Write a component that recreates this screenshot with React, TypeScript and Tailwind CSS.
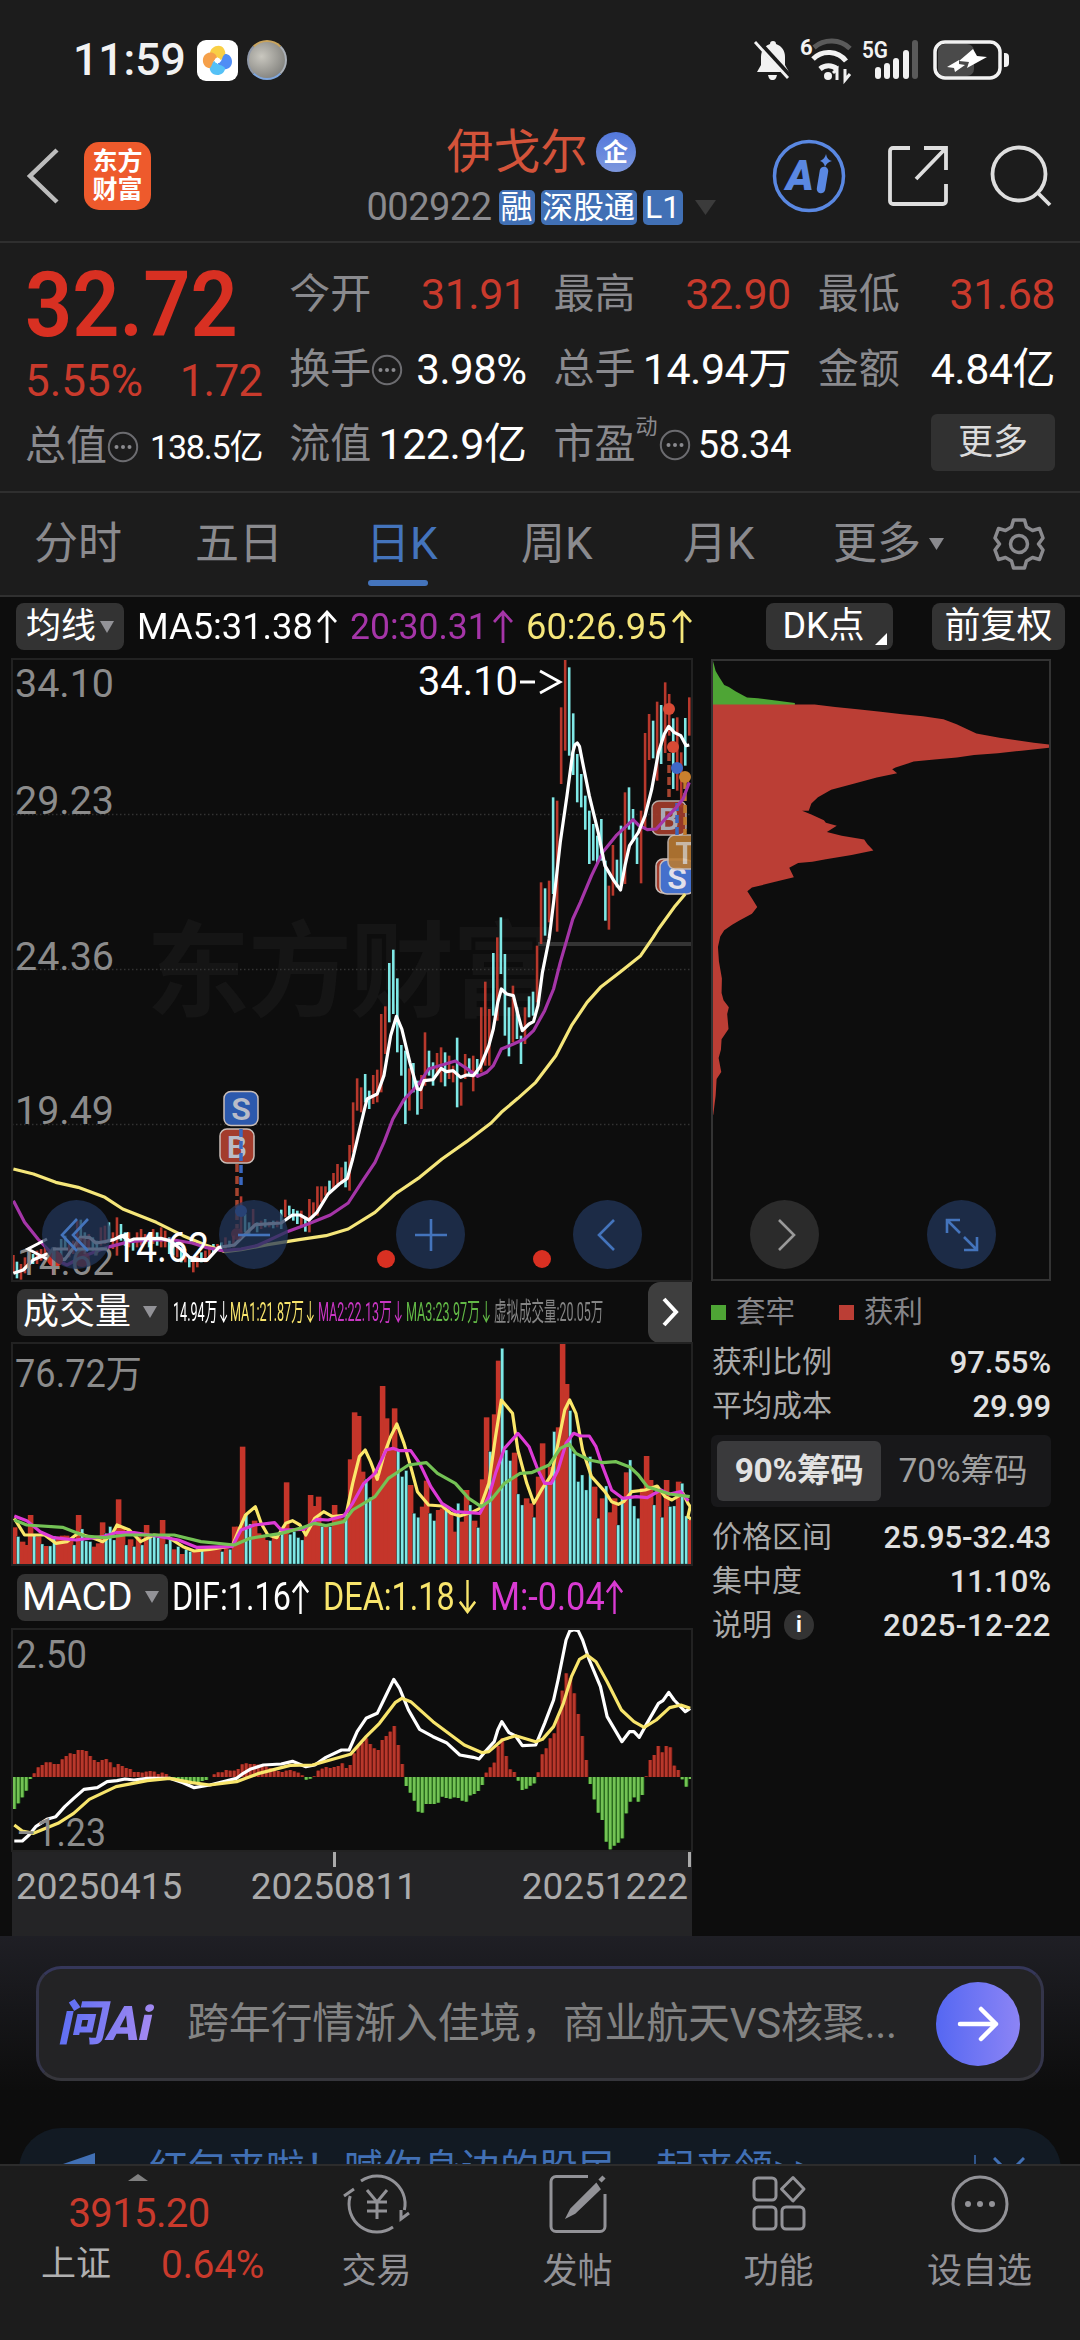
import React from 'react';
import clsx from 'clsx';

const RED = '#b8382c';
const CYAN = '#7fe8e6';

// each entry: colour, x, high, low
const CANDLES_LOW =
  'r30,948,1003 c38,968,1018 r47,975,1022 r56,955,1003 r65,950,985 c74,945,975 r83,935,975 r92,930,965 r101,925,960 r110,935,970 r119,930,1008 r128,935,985 c137,900,960 c146,890,930 r155,915,955 r164,905,945 r173,845,925 c181,842,905 c190,880,945 r199,885,930 c208,895,935 c217,905,940 r226,865,920 r235,860,915 c244,850,905 r253,880,930 r262,835,950 c271,855,905 c280,880,920 r289,880,925 c298,900,935 r307,880,925 r316,870,920 r325,885,915 c334,890,925 r343,870,915 c352,880,920 r361,865,925 r370,875,925 c379,895,945 c388,905,950 r397,920,955 c406,925,970 r415,930,970 c424,955,985 r433,960,1000 r442,950,985 c451,940,970 r460,935,970 r469,920,955 c478,915,945 r487,915,935 c496,910,935 r505,895,930 c514,905,925 r523,890,925 r540,772,880 c549,825,880 c558,850,885 r567,810,870 c576,850,880 r585,845,870 c594,840,865 r603,848,865 c612,845,868 r621,845,865 c630,812,870 r639,782,835 c648,800,830 c657,810,845 c666,815,855 r675,815,860 c684,835,878 r693,780,880 r702,790,835 r711,742,830 r720,742,790 r729,742,770 c738,725,760 r747,702,750 r756,675,735 r765,685,735 c774,668,745 r783,618,755 r791,490,640 r800,418,515 r809,445,520 c818,405,490 c827,455,510 r836,408,495 r845,392,490 r854,225,460 r863,202,345 c872,72,250 c881,32,225 c890,118,340 c899,318,410 c908,335,555 r917,388,515 c926,372,460 c935,425,527 r944,408,510 r952,280,440 c961,335,410 c970,370,440 r979,342,410 r988,325,430 c997,340,442 r1006,350,420 r1015,380,430 c1024,296,505 r1033,430,500 r1042,345,420 c1051,358,410 r1060,350,457 c1069,360,410 r1078,205,400 r1087,128,380 r1096,210,380 c1105,42,230 r1114,-5,245 c1122,-65,105 c1131,45,290 c1140,205,352 r1149,140,310 c1158,205,300 c1167,290,375 r1176,205,315 c1185,172,235 c1194,158,230 r1203,20,190';
const CANDLES_HIGH =
  'r1212,880,1065 c1221,898,1040 r1230,875,1000 c1239,625,915 r1248,635,1028 r1257,355,585 r1266,210,485 c1275,235,500 c1284,373,558 c1293,495,640 c1302,555,655 c1311,620,722 c1320,665,825 c1329,705,815 c1338,740,825 c1347,690,815 c1356,815,995 r1364,890,1022 r1373,768,920 c1382,812,895 c1391,710,890 r1400,610,885 c1409,595,722 c1418,660,755 c1427,745,825 r1436,665,883 r1445,432,715 r1454,375,513 c1463,395,508 r1472,338,575 c1481,348,525 r1490,280,492 r1499,315,440 c1508,388,600 r1517,385,605 r1526,490,655 c1535,387,530 r1544,325,440';

const VOLUMES =
  'r772 c800 r815 r825 r735 c792 r800 c822 r828 c828 c798 r800 r797 r797 r812 c825 r735 c777 c813 c815 r830 r820 r757 c790 c770 c810 r688 r775 c825 r808 c830 r800 c825 r765 c800 c800 c803 r750 c822 c808 r838 c830 r852 c838 c845 r840 r838 c842 r835 r838 r838 r838 c845 r835 c838 r770 r770 r530 c730 c762 r752 r790 r800 r810 c812 r800 r800 c778 r637 c793 c785 c803 c810 r770 r675 r708 r680 c770 r765 c770 r705 r745 r745 c740 r568 r427 r438 r605 c628 c682 r600 r620 r348 r445 r540 r415 c538 c620 c602 r645 c730 c742 r710 r632 c730 c752 r720 r715 c718 r730 r785 c700 r755 r660 c705 r752 c773 r628 r442 c545 r433 r272 c235 c540 c572 r548 c672 c705 r685 r700 c742 r620 r520 c645 r590 c485 r472 r222 r342 c422 c550 c635 c615 c660 c560 r650 c745 r685 c648 r727 r685 c765 c680 r607 c570 c708 c745 r655 r558 r630 c705 r655 c742 r630 c710 c708 r635 c640 c738 r750';

const MACD_BARS = [
  747, 730, 712, 692, 657, 640, 622, 615, 607, 607, 612, 612, 598, 588, 580, 582, 570, 570, 573, 588, 600, 606, 600, 597, 607, 622, 612, 618, 624, 627,
  636, 636, 638, 635, 633, 635, 642, 638, 642, 655, 658, 660, 664, 668, 670, 670, 668, 663, 660, 651, 643, 637, 637, 630, 632, 632, 627, 613, 610, 612,
  612, 614, 616, 620, 624, 630, 633, 636, 632, 630, 634, 638, 646, 659, 656, 649, 632, 626, 621, 624, 621, 618, 610, 624, 615, 580, 560, 548, 535, 552,
  565, 570, 540, 528, 515, 498, 555, 612, 678, 698, 722, 755, 758, 732, 732, 732, 728, 710, 714, 716, 712, 714, 722, 725, 706, 702, 693, 675, 638, 622,
  608, 558, 535, 588, 628, 636, 662, 690, 686, 677, 670, 637, 583, 565, 535, 520, 470, 392, 340, 355, 400, 462, 528, 600, 672, 718, 758, 780, 845, 868,
  857, 848, 835, 760, 725, 712, 725, 705, 649, 600, 585, 558, 577, 558, 562, 617, 630, 658, 680, 657,
];

const Candles: React.FC<{ data: string }> = ({ data }) => (
  <>
    {data.split(' ').map(item => {
      const [x, high, low] = item.slice(1).split(',').map(Number);
      return (
        <path
          key={item}
          d={`M${x} ${high}V${low}`}
          stroke={item[0] === 'r' ? RED : CYAN}
          strokeWidth={2.6}
          vectorEffect="non-scaling-stroke"
        />
      );
    })}
  </>
);

const Line: React.FC<{ points: string; color: string; width?: number }> = ({ points, color, width = 3.2 }) => (
  <polyline
    points={points}
    fill="none"
    stroke={color}
    strokeWidth={width}
    strokeLinejoin="round"
    vectorEffect="non-scaling-stroke"
  />
);

const AxisText: React.FC<{ x: number; y: number; w: number; size?: number; color?: string; children: string }> = ({
  x,
  y,
  w,
  size = 39,
  color = '#8b8b8b',
  children,
}) => (
  <text x={x} y={y} fontSize={size} fill={color} textLength={w} lengthAdjust="spacingAndGlyphs">
    {children}
  </text>
);

const Marker: React.FC<{ x: number; y: number; label?: string; color: string; textColor?: string; opacity?: number }> = ({
  x,
  y,
  label,
  color,
  textColor = '#b9bcc8',
  opacity = 1,
}) => (
  <g opacity={opacity}>
    <rect x={x} y={y} width={34} height={34} rx={7} fill={color} stroke="#c9bdb8" strokeWidth={1.5} />
    {label && (
      <text x={x + 17} y={y + 28.5} fontSize={32} fontWeight={600} fill={textColor} textAnchor="middle">
        {label}
      </text>
    )}
  </g>
);

const Triangle: React.FC<{ className?: string }> = ({ className }) => (
  <svg viewBox="0 0 14 12" preserveAspectRatio="none" className={clsx('shrink-0', className)} fill="currentColor">
    <path d="M0 0h14L7 12z" />
  </svg>
);

const Dots: React.FC = () => (
  <svg viewBox="0 0 32 32" className="h-8 w-8 shrink-0" fill="none" stroke="#6c6c70" strokeWidth={2}>
    <circle cx={16} cy={16} r={14.2} />
    <g fill="#8a8a8e" stroke="none">
      <circle cx={9.5} cy={16} r={2} />
      <circle cx={16} cy={16} r={2} />
      <circle cx={22.5} cy={16} r={2} />
    </g>
  </svg>
);

const Arrow: React.FC<{ down?: boolean; className: string }> = ({ down, className }) => (
  <svg
    viewBox="0 0 20 33"
    preserveAspectRatio="none"
    className={clsx('shrink-0', down && 'rotate-180', className)}
    fill="none"
    stroke="currentColor"
    strokeWidth={2.8}
  >
    <path d="M10 33V2M1 12l9-10 9 10" />
  </svg>
);

const StatusBar: React.FC = () => (
  <div className="flex h-[120px] items-center pl-[73px] pr-[70px] text-[#f2f2f2]">
    <span className="w-[124px] whitespace-nowrap text-[44.5px] font-medium leading-none">11:59</span>
    <svg viewBox="0 0 41 41" className="h-[41px] w-[41px]">
      <rect width={41} height={41} rx={9} fill="#fff" />
      <path d="M13 14C13 6 24 3 27 9c3 5 1 11-5 11-1-5-6-2-9-6z" fill="#f9cf45" />
      <path d="M28 14c8 0 9 11 4 14-5 3-11 1-11-5 5-1 3-6 7-9z" fill="#4f8df5" />
      <path d="M28 28c0 8-11 9-14 4-3-5-1-11 5-11 1 5 6 3 9 7z" fill="#55c1f6" />
      <path d="M13 28C5 28 4 17 9 14c5-3 11-1 11 5-5 1-4 6-7 9z" fill="#f5a04a" />
      <circle cx={20.5} cy={20.5} r={2.8} fill="#fff" />
    </svg>
    <span className="ml-[9px] h-10 w-10 rounded-full border-2 border-t-[#c9a45e] border-r-[#aab0b8] border-b-[#7fa6dc] border-l-[#8f98a8] bg-radial-[at_35%_40%] from-[#c9c7bf] to-[#6f6f6c]" />
    <div className="ml-auto flex items-center">
      <svg viewBox="0 0 38 42" className="h-[42px] w-[38px]">
        <path d="M20 2c2 0 3 1 3 3 6 2 9 7 9 13v8l4 7H4l4-7v-8C8 12 11 7 17 5c0-2 1-3 3-3z" fill="#f2f2f2" />
        <path d="M15 36h9c-1 4-2 5-4.5 5S16 40 15 36z" fill="#f2f2f2" />
        <path d="M3 1l34 37" stroke="#1c1c1c" strokeWidth={6} />
        <path d="M2 3l33 36" stroke="#f2f2f2" strokeWidth={2.8} />
      </svg>
      <svg viewBox="0 0 54 44" className="ml-[9px] h-11 w-[54px] overflow-visible" fill="none" strokeWidth={5}>
        <text x={0} y={17} fontSize={22} fontWeight={700} fill="#f2f2f2">
          6
        </text>
        <path d="M14 9.500a27 27 0 0 1 36 1" stroke="#5a5a5a" />
        <path d="M13 21a22 22 0 0 1 33 2" stroke="#f2f2f2" />
        <path d="M20 31a13 13 0 0 1 17 0" stroke="#f2f2f2" />
        <circle cx={28} cy={38} r={4} fill="#f2f2f2" />
        <path d="M37 42V31l-4 4M45 31v11l5-6" stroke="#f2f2f2" strokeWidth={3} />
      </svg>
      <svg viewBox="0 0 58 44" className="ml-2 h-11 w-[58px] overflow-visible">
        <text x={0} y={20} fontSize={24} fontWeight={600} fill="#f2f2f2" textLength={26} lengthAdjust="spacingAndGlyphs">
          5G
        </text>
        <g fill="#f2f2f2">
          <rect x={13} y={29} width={6} height={12} rx={3} />
          <rect x={22} y={25} width={6} height={16} rx={3} />
          <rect x={31} y={20} width={6} height={21} rx={3} />
          <rect x={41} y={12} width={6} height={29} rx={3} />
          <rect x={50} y={2} width={6} height={39} rx={3} fill="#5a5a5a" />
        </g>
      </svg>
      <svg viewBox="0 0 77 40" className="ml-[13px] h-10 w-[77px]">
        <rect x={5} y={4} width={36} height={32} rx={7} fill="#4a4a4a" />
        <rect x={2} y={2} width={65} height={36} rx={10} fill="none" stroke="#f2f2f2" strokeWidth={3.5} />
        <path d="M71 13h1a4 4 0 0 1 4 4v6a4 4 0 0 1-4 4h-1z" fill="#f2f2f2" />
        <path d="M40 9L26 21l10 1-2 6 20-11-10-1zM26 20l-12 7 7 1 1 4 10-7-6-1z" fill="#fff" />
      </svg>
    </div>
  </div>
);

const Header: React.FC = () => (
  <div className="grid h-[123px] grid-cols-[1fr_auto_1fr] items-center border-b-2 border-[#2f2f2f] pl-[26px] pr-[28px]">
    <div className="flex items-center pb-2.5">
      <svg viewBox="0 0 34 58" className="h-[58px] w-[34px]" fill="none" stroke="#bcbcbc" strokeWidth={4.5}>
        <path d="M31 3L4 29l27 26" />
      </svg>
      <div className="ml-6 flex h-[68px] w-[67px] flex-col items-center justify-center rounded-[15px] bg-[#ee5a2c] text-[25px] font-bold leading-[28px] text-white">
        <span>东方</span>
        <span>财富</span>
      </div>
    </div>
    <div className="flex flex-col items-center pb-[7px] pl-1">
      <div className="flex h-[60px] items-center gap-2 text-[47px] leading-[60px] text-[#d3533a]">
        伊戈尔
        <span className="flex h-10 w-10 items-center justify-center rounded-full bg-linear-to-b from-[#5378dc] to-[#7d97dd] text-[25px] font-bold leading-none text-white">
          企
        </span>
      </div>
      <div className="flex h-[50px] items-center text-[32px] leading-none text-white">
        <span className="mr-[7px] text-[38px] tracking-[-0.5px] text-[#8a8a8e]">002922</span>
        <span className="mr-1.5 flex h-[35px] items-center rounded-[5px] bg-[#4170b5] px-0.5">融</span>
        <span className="mr-1.5 flex h-[35px] w-24 items-center justify-center rounded-[5px] bg-[#4170b5] text-[31px]">深股通</span>
        <span className="mr-3 flex h-[35px] w-10 items-center justify-center rounded-[5px] bg-[#4170b5]">L1</span>
        <Triangle className="h-[15px] w-[21px] text-[#3b3b3b]" />
      </div>
    </div>
    <div className="flex items-center justify-end gap-[42px] pb-2.5">
      <svg viewBox="0 0 74 74" className="h-[74px] w-[74px]" fill="none">
        <circle cx={37} cy={37} r={34.5} stroke="#5a88e2" strokeWidth={3.5} />
        <text x={14} y={51} fontSize={42} fontWeight={900} fontStyle="italic" fill="#5a88e2">
          A
        </text>
        <path d="M52 32l-3 18" stroke="#5a88e2" strokeWidth={8.5} strokeLinecap="round" />
        <path d="M54 15q1 6 6 7-5 1-7 6-1-5-5-6 5-2 6-7z" fill="#5a88e2" />
      </svg>
      <svg viewBox="0 0 60 60" className="h-[60px] w-[60px]" fill="none" stroke="#dedede" strokeWidth={3.8}>
        <path d="M22 2H5a3 3 0 0 0-3 3v50a3 3 0 0 0 3 3h50a3 3 0 0 0 3-3V38M36 2h22v22M57 3L28 33" />
      </svg>
      <svg viewBox="0 0 62 62" className="h-[62px] w-[62px]" fill="none" stroke="#dedede" strokeWidth={3.8}>
        <circle cx={29} cy={29} r={26.5} />
        <path d="M48 48l12 12" />
      </svg>
    </div>
  </div>
);

interface StatProps {
  label: string;
  value: string;
  up?: boolean;
  dots?: boolean;
  sup?: string;
  valueClass?: string;
}

const Stat: React.FC<StatProps> = ({ label, value, up, dots, sup, valueClass }) => (
  <div className="flex h-[75px] items-center whitespace-nowrap">
    <span className="text-[41px] leading-none text-[#8a8a8e]">{label}</span>
    {sup && <span className="-mt-9 w-[23px] text-[22px] leading-none text-[#8a8a8e]">{sup}</span>}
    {dots && <Dots />}
    <span className={clsx('ml-auto leading-none tracking-[-0.5px]', valueClass ?? 'text-[43px]', up ? 'text-[#c93a2c]' : 'text-white')}>
      {value}
    </span>
  </div>
);

const QuotePanel: React.FC = () => (
  <div className="grid h-[250px] grid-cols-4 gap-x-[27px] border-b-2 border-[#2f2f2f] pl-[25px] pr-[25px] pt-3.5">
    <div>
      <div className="h-24 origin-left scale-x-[0.92] whitespace-nowrap pt-px text-[90px] font-semibold leading-[96px] text-[#d83022]">
        32.72
      </div>
      <div className="flex h-14 items-center justify-between text-[44px] leading-none text-[#c93a2c]">
        <span>5.55%</span>
        <span className="tracking-[-0.8px]">1.72</span>
      </div>
      <Stat label="总值" value="138.5亿" dots valueClass="text-[34px] tracking-[-1.2px]" />
    </div>
    <div>
      <Stat label="今开" value="31.91" up />
      <Stat label="换手" value="3.98%" dots valueClass="text-[42px]" />
      <Stat label="流值" value="122.9亿" />
    </div>
    <div>
      <Stat label="最高" value="32.90" up />
      <Stat label="总手" value="14.94万" />
      <Stat label="市盈" value="58.34" sup="动" dots valueClass="text-[38px]" />
    </div>
    <div>
      <Stat label="最低" value="31.68" up />
      <Stat label="金额" value="4.84亿" />
      <button className="ml-auto mt-[7px] block h-[57px] w-[124px] rounded-md bg-[#313131] text-[35px] leading-[53px] text-[#dcdcdc]">更多</button>
    </div>
  </div>
);

const PeriodTabs: React.FC = () => (
  <div className="flex h-[104px] items-center border-b-2 border-[#303030] pl-[34px] text-[44px] leading-none text-[#8a8a8e]">
    <span className="w-[161px]">分时</span>
    <span className="w-[171px]">五日</span>
    <span className="relative w-[155px] text-[#4474bc]">
      日K
      <i className="absolute -bottom-[20px] left-0.5 h-1.5 w-[60px] rounded-full bg-[#4474bc]" />
    </span>
    <span className="w-[162px]">周K</span>
    <span className="w-[150px]">月K</span>
    <span className="flex w-[160px] items-center gap-2">
      更多
      <Triangle className="h-3 w-[15px]" />
    </span>
    <svg viewBox="0 0 52 52" className="h-[52px] w-[52px]" fill="none" stroke="#8a8a8e" strokeWidth={3.5} strokeLinejoin="round">
      <path d="M20.5 2h11l2 7 6 3.500 7-2 3.500 9.500-4.500 6 4.500 6-3.500 9.500-7-2-6 3.500-2 7h-11l-2-7-6-3.500-7 2L2 32l4.500-6L2 20l3.500-9.500 7 2 6-3.500z" />
      <circle cx={26} cy={26} r={8.5} />
    </svg>
  </div>
);

const PriceChart: React.FC = () => (
  <svg viewBox="0 0 680 621" className="block h-[621px] w-[680px]">
    <text x={134} y={350} fontSize={104} fontWeight={700} fill="#151515" textLength={410}>
      东方财富
    </text>
    <g stroke="#333" strokeWidth={1.5} strokeDasharray="1.5 2.5">
      <path d="M0 155.500h680M0 310.500h680M0 465.500h680" />
    </g>
    <path d="M526 285h154" stroke="#343434" strokeWidth={4} />
    <g transform="translate(-12 280) scale(.446429 .333333)">
      <Candles data={CANDLES_LOW} />
    </g>
    <g transform="translate(-12 -70) scale(.446429 .333333)">
      <Candles data={CANDLES_HIGH} />
    </g>
    <g fill="#d84a35">
      <circle cx={657} cy={50} r={6} />
      <circle cx={661} cy={88} r={6} />
    </g>
    <Marker x={212} y={432.5} label="S" color="#2c59ad" />
    <Marker x={208} y={470} label="B" color="#a33c2c" />
    <Marker x={644} y={200} color="#a33c2c" />
    <Marker x={648} y={201} label="S" color="#4470cc" textColor="#e3e0ea" />
    <Marker x={656} y={176} label="T" color="#b97a33" textColor="#dccbb8" opacity={0.9} />
    <Marker x={640} y={142} label="B" color="#a33c2c" opacity={0.9} />
    <g strokeWidth={3.5} strokeDasharray="8 4" fill="none">
      <path d="M225 505v64M657 94v46" stroke="#a5442f" />
      <path d="M229 470v58M665 144v34" stroke="#3a68c0" />
      <path d="M673 122v54" stroke="#c07a2c" />
    </g>
    <circle cx={665} cy={109} r={6} fill="#3f68c8" />
    <circle cx={673} cy={118} r={6} fill="#c9802e" />
    <g transform="translate(-12 280) scale(.446429 .333333)">
      <Line
        color="#f5e67a"
        points="30,690 75,705 125,730 175,745 235,775 275,810 350,850 410,890 460,918 505,938 540,932 600,917 670,902 730,890 780,870 840,820 885,765 940,715 990,660 1045,608 1100,552 1123,520 1160,478 1200,430 1245,350 1280,260 1315,190 1345,145 1390,98 1435,50 1463,-5 1475,-30 1510,-95 1535,-135"
      />
      <Line
        color="#a535a8"
        points="30,785 55,850 85,900 110,935 130,965 150,978 175,960 200,945 240,925 290,908 340,903 390,903 430,912 460,925 500,935 540,930 575,920 600,905 640,880 690,855 740,828 780,792 810,730 840,670 860,610 880,540 905,482 940,432 960,390 990,378 1020,366 1045,388 1070,412 1090,400 1105,380 1123,330 1145,318 1175,300 1195,275 1220,215 1240,150 1255,70 1268,10 1283,-60 1300,-110 1325,-190 1350,-260 1380,-310 1400,-335 1418,-358 1430,-342 1450,-328 1470,-330 1490,-360 1515,-395 1530,-420 1544,-470"
      />
      <Line
        color="#ffffff"
        points="30,1003 52,993 75,962 105,945 125,955 145,962 165,925 180,895 200,895 215,912 235,908 255,902 272,890 290,905 300,900 360,898 380,905 400,925 425,955 445,962 465,962 490,925 525,918 550,885 572,857 630,852 655,828 672,828 692,843 710,820 735,765 760,735 778,718 790,660 805,575 822,480 845,465 860,410 875,290 888,232 900,270 918,370 935,450 942,452 950,425 970,422 988,388 1000,398 1015,395 1032,415 1045,408 1060,410 1075,385 1095,320 1105,270 1115,190 1123,150 1135,165 1150,170 1160,225 1170,275 1185,255 1195,248 1205,200 1215,100 1230,0 1240,-110 1255,-290 1270,-430 1283,-560 1288,-583 1293,-588 1298,-578 1305,-530 1320,-430 1340,-320 1355,-220 1375,-175 1390,-147 1400,-220 1410,-280 1430,-320 1445,-370 1460,-450 1475,-560 1488,-615 1498,-638 1510,-620 1525,-610 1537,-580 1544,-582"
      />
    </g>
    <g fill="#d83022">
      <circle cx={374} cy={600} r={9} />
      <circle cx={530} cy={600} r={9} />
      <circle cx={43} cy={600} r={8} />
      <circle cx={70} cy={600} r={8} opacity={0.7} />
      <circle cx={70} cy={586} r={7} opacity={0.6} />
      <circle cx={225} cy={575} r={6} opacity={0.7} />
    </g>
    <circle cx={229} cy={552} r={6} fill="#3f68c8" />
    <AxisText x={3} y={38} w={99}>34.10</AxisText>
    <AxisText x={3} y={155} w={99}>29.23</AxisText>
    <AxisText x={3} y={311} w={99}>24.36</AxisText>
    <AxisText x={3} y={465} w={99}>19.49</AxisText>
    <AxisText x={5} y={616} w={97}>14.62</AxisText>
    <AxisText x={406} y={36} w={100} size={41} color="#fff">34.10</AxisText>
    <path d="M508 23h15M528 12l20 11-20 11" fill="none" stroke="#fff" strokeWidth={2.8} />
    <path d="M35 580l-19 10 19 10M41 590h15M65 590h30" fill="none" stroke="#fff" strokeWidth={3} />
    <AxisText x={103} y={603} w={94} size={42} color="#fff">14.62</AxisText>
  </svg>
);

const ChipProfile: React.FC = () => (
  <svg viewBox="32 48 1018 1474" preserveAspectRatio="none" className="block h-full w-full">
    <path d="M32 48L40 72 52 88 66 105 80 110 100 120 135 135 168 137 222 142 280 148V153H32z" fill="#4ea535" />
    <path
      d="M32 152H340L402 158 470 163 540 169 605 175 668 180 730 187 770 199 830 221 900 231 952 237 1004 243 1050 247V255L967 262 895 268 823 272 771 278 703 283 640 288 585 302 575 306 590 316 528 326 458 341 390 355 350 373 330 388 322 405H302L330 414 368 428 374 434 407 441 377 456 422 465 490 474 500 485 518 500 452 511 374 521 333 527 290 530 263 541 277 564 230 573 173 584 150 588 136 597 152 617 166 635 150 651 112 667 90 677 66 690 54 705 47 730 50 765 59 805 58 840 64 857 80 874 75 890 79 926 58 950 56 975 49 995 57 1028 43 1045 40 1085 36 1110 33 1130H32z"
      fill="#bb3e35"
    />
  </svg>
);

const VolumeChart: React.FC = () => (
  <svg viewBox="0 0 680 222" className="block h-[222px] w-[680px]">
    <g transform="translate(-12 -73) scale(.446429 .333333)">
      {VOLUMES.split(' ').map((v, i) => {
        const x = 32 + i * 8.96;
        const top = Number(v.slice(1));
        return v[0] === 'r' ? (
          <rect key={i} x={x - 5.5} y={top} width={12.5} height={882 - top} fill="#c5352a" />
        ) : (
          <rect key={i} x={x - 3.5} y={top} width={7} height={882 - top} fill="#7fe8e6" stroke="#123c3c" strokeWidth={1} />
        );
      })}
      <Line
        color="#fbe76a"
        points="32,745 55,795 100,795 125,820 150,815 175,790 210,805 230,815 250,795 262,765 290,780 315,815 345,795 375,800 410,830 435,843 470,838 520,828 535,780 550,735 572,710 585,760 600,795 620,803 640,760 655,752 672,765 685,795 705,745 725,725 745,740 775,735 790,640 805,560 818,540 830,575 845,628 860,555 875,500 889,462 905,520 920,590 935,665 960,705 990,708 1010,730 1030,738 1060,725 1075,715 1095,640 1110,500 1123,390 1148,430 1160,540 1180,640 1196,700 1215,655 1235,615 1250,520 1265,420 1276,390 1290,430 1305,540 1325,620 1355,665 1370,695 1385,703 1397,695 1415,665 1445,660 1472,648 1490,680 1505,690 1530,670 1541,700 1546,710 1541,740 1548,748"
      />
      <Line
        color="#dd3ad6"
        points="32,738 60,752 90,785 120,803 170,810 230,800 260,788 300,788 350,798 400,810 440,832 520,830 540,780 570,765 615,758 630,780 680,778 710,748 735,750 770,738 790,700 815,640 840,610 865,540 880,535 895,542 920,542 940,580 965,650 990,700 1020,725 1075,730 1095,680 1110,610 1130,535 1160,490 1185,530 1205,600 1220,640 1235,640 1250,600 1268,520 1285,490 1300,498 1320,498 1335,530 1350,590 1370,660 1395,685 1425,680 1450,683 1480,660 1500,672 1525,665 1542,692"
      />
      <Line
        color="#74c255"
        points="32,750 60,765 140,772 190,798 235,803 280,795 390,795 450,815 525,825 560,805 630,790 680,772 705,760 730,767 770,755 790,720 840,680 870,625 915,585 955,578 980,610 1020,640 1050,685 1078,710 1100,690 1130,640 1165,610 1190,608 1230,585 1255,535 1275,522 1290,550 1320,570 1350,578 1380,575 1412,592 1430,615 1450,650 1500,672 1545,680"
      />
    </g>
    <AxisText x={3} y={44} w={127} size={38}>76.72万</AxisText>
  </svg>
);

const MacdChart: React.FC = () => (
  <svg viewBox="0 0 680 221" className="block h-[221px] w-[680px]">
    <g transform="translate(-12 -69) scale(.446429 .333333)">
      {MACD_BARS.map((y, i) => {
        const up = y < 651;
        return (
          <g key={i}>
            <rect x={27.5 + i * 8.96} y={Math.min(y, 651)} width={9} height={Math.abs(651 - y)} fill={up ? '#7c1c14' : '#2f7d22'} />
            <rect x={29 + i * 8.96} y={Math.min(y, 651)} width={5.6} height={Math.abs(651 - y)} fill={up ? '#b8382c' : '#74c255'} />
          </g>
        );
      })}
      <Line
        color="#ffffff"
        points="32,843 50,843 65,825 80,800 105,778 125,770 145,740 165,715 188,688 218,683 240,665 262,662 280,657 300,660 330,655 380,655 410,668 435,683 470,675 530,655 545,640 560,628 590,615 630,612 655,604 685,620 705,615 730,592 765,570 782,570 800,515 820,475 845,460 865,405 882,358 895,385 915,450 940,508 970,530 1000,548 1030,585 1060,592 1073,597 1090,570 1107,545 1115,510 1124,485 1140,518 1155,528 1170,557 1200,555 1220,490 1240,420 1250,360 1268,240 1276,214 1285,209 1295,212 1305,240 1320,300 1345,380 1360,470 1393,545 1410,515 1420,515 1432,532 1445,500 1475,430 1485,422 1498,397 1510,420 1535,455 1546,445"
      />
      <Line
        color="#f8e56c"
        points="32,795 50,813 75,820 130,790 165,760 200,718 260,680 330,662 380,655 430,668 470,675 530,665 580,640 650,616 700,615 785,583 820,530 850,490 885,428 900,415 920,425 970,485 1040,555 1080,578 1095,575 1125,540 1155,527 1200,545 1215,538 1240,500 1262,430 1280,350 1298,298 1315,285 1335,305 1360,365 1392,450 1420,485 1443,502 1470,480 1500,443 1525,435 1546,445"
      />
    </g>
    <AxisText x={4} y={39} w={71} size={38}>2.50</AxisText>
    <AxisText x={4} y={217} w={90} size={38}>−1.23</AxisText>
  </svg>
);

const volumeLegend = [
  { text: '14.94万', className: 'text-white', box: 'w-[57px]' },
  { text: 'MA1:21.87万', className: 'text-[#f8e56c]', box: 'w-[88px]' },
  { text: 'MA2:22.13万', className: 'text-[#c936c4]', box: 'w-[88px]' },
  { text: 'MA3:23.97万', className: 'text-[#62b846]', box: 'w-[88px]' },
];

const DropButton: React.FC<{ label: string; className: string; gap?: string }> = ({ label, className, gap }) => (
  <button className={clsx('flex h-[47px] shrink-0 items-center rounded-lg bg-[#333] leading-none text-white', className)}>
    {label}
    <Triangle className={clsx('h-3 w-3.5 text-[#929297]', gap)} />
  </button>
);

const FloatButton: React.FC<{ path: string; gray?: boolean }> = ({ path, gray }) => (
  <button
    className={clsx(
      'flex h-[69px] w-[69px] items-center justify-center rounded-full',
      gray ? 'bg-[#2b2b2b] text-[#9a9a9a]' : 'bg-[#22365a]/75 text-[#4474bc]',
    )}
  >
    <svg viewBox="0 0 36 36" className="h-9 w-9" fill="none" stroke="currentColor" strokeWidth={2.6}>
      <path d={path} />
    </svg>
  </button>
);

const InfoRow: React.FC<{ label: string; value: string; info?: boolean }> = ({ label, value, info }) => (
  <div className="flex h-11 items-center pl-px">
    <span className="text-[30px] leading-none text-[#a9a9a9]">{label}</span>
    {info && (
      <span className="ml-3 flex h-[30px] w-[30px] items-center justify-center rounded-full bg-[#333] text-[22px] font-bold leading-none text-white">
        i
      </span>
    )}
    <span
      className={clsx('ml-auto text-[31px] font-medium leading-none text-[#e0e0e0]', info ? 'tracking-[0.6px]' : 'tracking-[-0.1px]')}
    >
      {value}
    </span>
  </div>
);

const ChartArea: React.FC = () => (
  <div className="relative flex h-[1339px] bg-[#0d0d0d] pl-3">
    <div className="w-[680px]">
      <div className="flex h-[62px] items-center gap-[13px] pb-[3px] pl-1 text-[37px] leading-none">
        <DropButton label="均线" className="w-[108px] justify-center text-[35px]" gap="ml-1" />
        <span className="flex w-[202px] items-center justify-between text-white">
          <span className="w-[175px] origin-left scale-x-[0.98]">MA5:31.38</span>
          <Arrow className="h-[33px] w-5" />
        </span>
        <span className="flex w-[165px] items-center justify-between text-[#a535a8]">
          <span className="w-[138px] origin-left scale-x-[0.96]">20:30.31</span>
          <Arrow className="h-[33px] w-5" />
        </span>
        <span className="flex w-[168px] items-center justify-between text-[#f5e67a]">
          <span className="w-[140px] origin-left scale-x-[0.98]">60:26.95</span>
          <Arrow className="h-[33px] w-5" />
        </span>
      </div>
      <div className="h-[622px] outline-2 -outline-offset-1 outline-[#222]">
        <PriceChart />
      </div>
      <div className="flex h-[62px] items-center pl-[5px]">
        <DropButton label="成交量" className="w-[151px] px-1.5 text-[36px]" gap="ml-3" />
        <div className="ml-[5px] flex text-[26px] leading-none">
          {volumeLegend.map(item => (
            <div key={item.text} className={clsx('flex items-center', item.className, item.box)}>
              <span className="flex origin-left scale-x-[0.485] items-center whitespace-nowrap">
                {item.text}
                <Arrow down className="ml-1.5 h-[22px] w-[15px]" />
              </span>
            </div>
          ))}
          <div className="w-[107px]">
            <span className="block origin-left scale-x-[0.48] whitespace-nowrap text-[#858585]">虚拟成交量:20.05万</span>
          </div>
        </div>
        <button className="ml-auto flex h-[61px] w-11 shrink-0 items-center justify-center rounded-l-[12px] bg-[#3e3e3e]">
          <svg viewBox="0 0 18 30" className="h-[30px] w-[18px]" fill="none" stroke="#fff" strokeWidth={4}>
            <path d="M3 2l12 13L3 28" />
          </svg>
        </button>
      </div>
      <div className="h-[222px] outline-2 -outline-offset-1 outline-[#222]">
        <VolumeChart />
      </div>
      <div className="flex h-[64px] items-center pl-[5px] text-[39px] leading-none">
        <DropButton label="MACD" className="w-[151px] px-[5px] text-[39px]" gap="ml-auto mr-1" />
        <span className="ml-1 flex w-[137px] items-center justify-between text-white">
          <span className="w-[112px] origin-left scale-x-[0.83] whitespace-nowrap">DIF:1.16</span>
          <Arrow className="h-[34px] w-[17px]" />
        </span>
        <span className="ml-[14px] flex w-[153px] items-center justify-between text-[#f8e56c]">
          <span className="w-[128px] origin-left scale-x-[0.83] whitespace-nowrap">DEA:1.18</span>
          <Arrow down className="h-[34px] w-[17px]" />
        </span>
        <span className="ml-[14px] flex w-[133px] items-center justify-between text-[#d93ad2]">
          <span className="w-[108px] origin-left scale-x-[0.88] whitespace-nowrap">M:-0.04</span>
          <Arrow className="h-[34px] w-[17px]" />
        </span>
      </div>
      <div className="h-[222px] outline-2 -outline-offset-1 outline-[#222]">
        <MacdChart />
      </div>
      <div className="mt-px flex h-[84px] justify-between bg-[#242426] px-1 pt-[15px] text-[37px] leading-[39px] text-[#ababab]">
        <span>20250415</span>
        <span className="relative mr-9">
          20250811
          <i className="absolute -top-[15px] left-[82px] h-[15px] w-[3px] bg-[#ababab]" />
        </span>
        <span className="relative">
          20251222
          <i className="absolute -right-[3px] -top-[15px] h-[15px] w-[3px] bg-[#ababab]" />
        </span>
      </div>
    </div>

    <div className="ml-[19px] w-[340px]">
      <div className="flex h-[62px] items-center pb-[3px]">
        <button className="relative ml-[55px] h-[47px] w-[127px] shrink-0 rounded-lg bg-[#333] pr-3 text-[36px] leading-[47px] text-white">
          DK点
          <svg viewBox="0 0 12 12" className="absolute bottom-[5px] right-1.5 h-3 w-3" fill="#fff">
            <path d="M12 0v12H0z" />
          </svg>
        </button>
        <button className="ml-[39px] h-[47px] w-[133px] shrink-0 rounded-lg bg-[#333] text-[36px] leading-[47px] text-white">前复权</button>
      </div>
      <div className="h-[622px] border-2 border-[#333]">
        <ChipProfile />
      </div>
      <div className="flex h-[59px] items-center pt-1 text-[29.5px] leading-none text-[#858589]">
        <i className="mr-2.5 h-[15px] w-[15px] bg-[#4ea535]" />
        套牢
        <i className="ml-[44px] mr-2.5 h-[15px] w-[15px] bg-[#bb3e35]" />
        获利
      </div>
      <InfoRow label="获利比例" value="97.55%" />
      <InfoRow label="平均成本" value="29.99" />
      <div className="mb-2 mt-[7px] flex h-[72px] items-center rounded-md bg-[#18181a] p-1.5 text-[33.5px] leading-none">
        <span className="flex h-[60px] flex-1 items-center justify-center rounded-md bg-[#3a3a3c] font-bold tracking-[-0.3px] text-[#e2e2e2]">
          90%筹码
        </span>
        <span className="flex flex-1 items-center justify-center text-[#a0a0a0]">70%筹码</span>
      </div>
      <InfoRow label="价格区间" value="25.95-32.43" />
      <InfoRow label="集中度" value="11.10%" />
      <InfoRow label="说明" value="2025-12-22" info />
    </div>

    {/* chart controls */}
    <div className="absolute left-[42px] top-[603px] flex gap-[108px]">
      <FloatButton path="M18 2L3 18l15 16M29 2L14 18l15 16" />
      <FloatButton path="M2 18h32" />
      <FloatButton path="M2 18h32M18 2v32" />
      <FloatButton path="M24 3L9 18l15 15" />
      <FloatButton gray path="M12 3l15 15-15 15" />
      <FloatButton path="M3 16V3h13M4 4l12 12M33 20v13H20M20 20l12 12" />
    </div>
  </div>
);

const AskAi: React.FC = () => (
  <div className="h-[192px] bg-linear-to-b from-[#1f1f25] to-[#0d0d0d] to-80% px-9 pt-[30px]">
    <div className="flex h-[115px] items-center rounded-[25px] border-[3px] border-[#36363c] border-t-[#35375a] border-x-[#34354a] bg-[#232325] pl-[18px] pr-[21px]">
      <div className="w-[130px] origin-left -skew-x-12 bg-linear-to-r from-[#5b6df5] to-[#a98bf0] to-80% bg-clip-text pl-1 text-[48px] font-black leading-[60px] tracking-[-1px] text-transparent">
        问Ai
      </div>
      <span className="whitespace-nowrap text-[42px] leading-none tracking-[-0.25px] text-[#838383]">跨年行情渐入佳境，商业航天VS核聚...</span>
      <div className="ml-auto flex h-[84px] w-[84px] shrink-0 items-center justify-center rounded-full bg-linear-to-r from-[#5567f2] to-[#8c84f5]">
        <svg viewBox="0 0 42 36" className="h-9 w-[42px]" fill="none" stroke="#fff" strokeWidth={4.5} strokeLinecap="round" strokeLinejoin="round">
          <path d="M3 18h36M24 3l15 15-15 15" />
        </svg>
      </div>
    </div>
  </div>
);

const PromoBanner: React.FC = () => (
  <div className="h-9 overflow-hidden bg-[#0d0d0d] px-[19px]">
    <div className="flex h-[84px] items-start rounded-[48px] bg-[#121a23] pl-11 pr-[36px] pt-[21px] text-[39px] leading-[40px] text-[#4170b5]">
      <svg viewBox="0 0 32 32" className="mt-1 h-8 w-8" fill="currentColor">
        <path d="M32 0v32L0 17V11z" />
      </svg>
      <span className="ml-[54px] whitespace-nowrap">红包来啦！喊你身边的股民一起来领&gt;&gt;</span>
      <i className="ml-auto mt-1.5 h-8 w-0.5 bg-[#30568c]" />
      <svg viewBox="0 0 32 32" className="ml-[17px] mt-2 h-8 w-8" fill="none" stroke="currentColor" strokeWidth={3}>
        <path d="M1 1l30 30M31 1L1 31" />
      </svg>
    </div>
  </div>
);

const NavItem: React.FC<{ label: string; children: React.ReactNode }> = ({ label, children }) => (
  <div className="flex w-[201px] flex-col items-center pt-2">
    <svg viewBox="0 0 64 60" className="h-[60px] w-16 overflow-visible" fill="none" stroke="#929297" strokeWidth={3}>
      {children}
    </svg>
    <span className="mt-[18px] text-[35px] leading-[40px] text-[#929297]">{label}</span>
  </div>
);

const BottomNav: React.FC = () => (
  <div className="flex h-[176px] border-t-2 border-[#2c2c2c] bg-[#1c1c1c]">
    <div className="flex w-[276px] flex-col items-center pt-2">
      <Triangle className="h-[7px] w-5 rotate-180 text-[#808080]" />
      <span className="mt-3 pl-0.5 text-[40px] leading-[42px] tracking-[-0.6px] text-[#c93a2c]">3915.20</span>
      <div className="mt-2.5 flex items-center self-stretch pl-[41px] text-[35px] leading-[40px] text-[#b0b0b0]">
        上证
        <span className="ml-[50px] text-[39px] tracking-[-0.3px] text-[#c93a2c]">0.64%</span>
      </div>
    </div>
    <NavItem label="交易">
      <path d="M16 7A28 28 0 0 1 59.4 36M5.200 22A28 28 0 0 0 48 53M-1 22L9 15M64 39l-8 6v-9" />
      <path d="M22 16l10 12 10-12M32 28v17M22 28h20M22 37h20" />
    </NavItem>
    <NavItem label="发帖">
      <path d="M42 2.500H10a5 5 0 0 0-5 5v45a5 5 0 0 0 5 5h44a5 5 0 0 0 5-5V20" />
      <path d="M50 12L26 36l-2 4 4-2 24-23zM54 7l4-4" strokeWidth={4.5} />
    </NavItem>
    <NavItem label="功能">
      <rect x={7} y={4} width={22} height={22} rx={4} />
      <path d="M46 3.500L57 15 46 27 34.500 15z" strokeLinejoin="round" />
      <rect x={7} y={33} width={22} height={22} rx={4} />
      <rect x={35} y={33} width={22} height={22} rx={4} />
    </NavItem>
    <NavItem label="设自选">
      <circle cx={32} cy={30} r={27} />
      <g fill="#929297" stroke="none">
        <circle cx={20} cy={30} r={3} />
        <circle cx={32} cy={30} r={3} />
        <circle cx={44} cy={30} r={3} />
      </g>
    </NavItem>
  </div>
);

export const App: React.FC = () => {
  return (
    <div className="h-[2340px] w-[1080px] overflow-hidden bg-[#1c1c1c] font-['Roboto','Noto_Sans_CJK_SC',sans-serif]">
      <StatusBar />
      <Header />
      <QuotePanel />
      <PeriodTabs />
      <ChartArea />
      <AskAi />
      <PromoBanner />
      <BottomNav />
    </div>
  );
};
export default App;
